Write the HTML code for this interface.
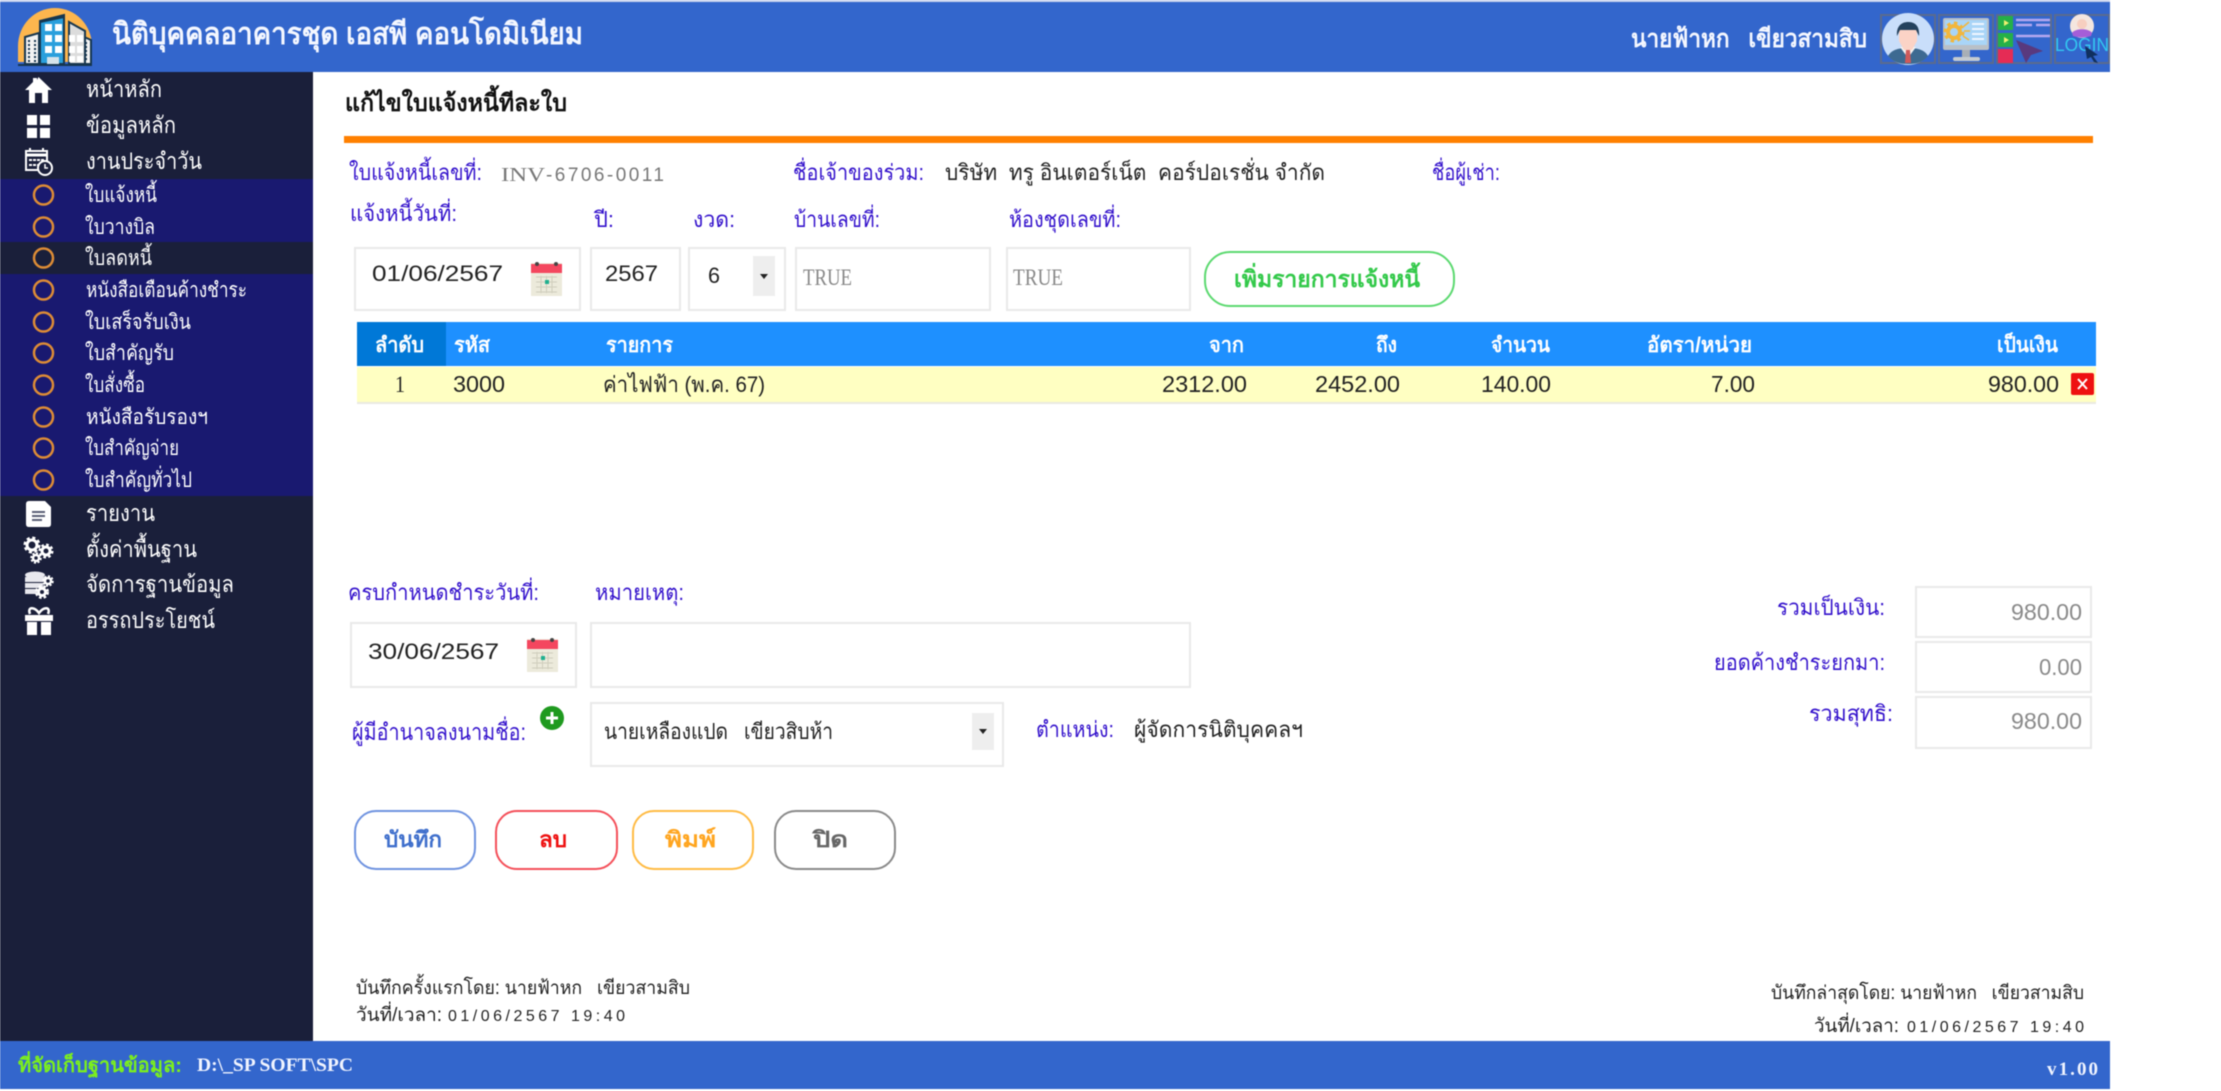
<!DOCTYPE html>
<html lang="th"><head><meta charset="utf-8"><title>แก้ไขใบแจ้งหนี้ทีละใบ</title>
<style>
html,body{margin:0;padding:0;background:#fff;width:2221px;height:1091px;overflow:hidden}
body{filter:blur(.45px)}
.b{position:absolute;box-sizing:border-box}
.i{border:2px solid #e9e9e9;background:#fff}
.btn{border:2px solid;background:#fff}
svg{position:absolute;left:0;top:0}
text{font-family:"Liberation Sans","Noto Sans CJK SC",sans-serif;font-size:22px}
.m{fill:#fff;font-size:23px}.s{fill:#fff;font-size:21px}
.l{fill:#3311cc;font-size:22px}.d{fill:#222;font-size:22px}
.h{fill:#fff;font-size:21px;font-weight:bold}.r{fill:#222;font-size:23px}
</style></head><body>
<div class="b" style="left:0;top:0;width:2110px;height:2px;background:#c9d4ee"></div>
<div class="b" style="left:0;top:2px;width:2110px;height:70px;background:#3366cc"></div>
<div class="b" style="left:0;top:72px;width:313px;height:969px;background:#1a1f3a"></div>
<div class="b" style="left:0;top:179px;width:313px;height:317px;background:#191970"></div>
<div class="b" style="left:0;top:242px;width:313px;height:32px;background:#1a1f3a"></div>
<div class="b" style="left:0;top:1041px;width:2110px;height:48px;background:#3366cc"></div>
<div class="b" style="left:344px;top:136px;width:1749px;height:7px;background:#ff8000"></div>

<div class="b i" style="left:354px;top:247px;width:227px;height:64px"></div>
<div class="b i" style="left:590px;top:247px;width:91px;height:64px"></div>
<div class="b i" style="left:688px;top:247px;width:98px;height:64px"></div>
<div class="b" style="left:753px;top:256px;width:22px;height:40px;background:#eee"></div>
<div class="b i" style="left:795px;top:247px;width:196px;height:64px"></div>
<div class="b i" style="left:1006px;top:247px;width:185px;height:64px"></div>
<div class="b btn" style="left:1204px;top:251px;width:251px;height:56px;border-color:#5cd970;border-radius:26px"></div>

<div class="b" style="left:357px;top:322px;width:1739px;height:44px;background:#1e90ff"></div>
<div class="b" style="left:357px;top:322px;width:89px;height:44px;background:#0078d7"></div>
<div class="b" style="left:357px;top:367px;width:1739px;height:35px;background:#ffffc2"></div>
<div class="b" style="left:357px;top:402px;width:1739px;height:2px;background:#e9e9e2"></div>
<div class="b" style="left:2071px;top:373px;width:23px;height:22px;background:#ee1111;border-radius:2px"></div>

<div class="b i" style="left:350px;top:622px;width:227px;height:66px"></div>
<div class="b i" style="left:590px;top:622px;width:601px;height:66px"></div>
<div class="b i" style="left:590px;top:702px;width:414px;height:65px"></div>
<div class="b" style="left:972px;top:713px;width:22px;height:37px;background:#eee"></div>
<div class="b i" style="left:1915px;top:586px;width:177px;height:52px"></div>
<div class="b i" style="left:1915px;top:641px;width:177px;height:52px"></div>
<div class="b i" style="left:1915px;top:696px;width:177px;height:53px"></div>

<div class="b btn" style="left:354px;top:810px;width:122px;height:60px;border-color:#6f93e0;border-radius:22px"></div>
<div class="b btn" style="left:495px;top:810px;width:123px;height:60px;border-color:#f4505a;border-radius:22px"></div>
<div class="b btn" style="left:632px;top:810px;width:122px;height:60px;border-color:#ffbb44;border-radius:22px"></div>
<div class="b btn" style="left:774px;top:810px;width:122px;height:60px;border-color:#8a8a8a;border-radius:22px"></div>

<svg width="2221" height="1091" viewBox="0 0 2221 1091" xmlns="http://www.w3.org/2000/svg">
<defs>
<g id="cal"><rect x="0" y="2" width="31" height="33" fill="#eceadb"/><rect x="0" y="3" width="31" height="9" fill="#f4475f"/><circle cx="6" cy="3" r="2" fill="#444"/><circle cx="25" cy="3" r="2" fill="#444"/><path d="M5 16H26M5 21H26M5 26H26M5 31H26M10 15V32M15.500 15V32M21 15V32" stroke="#cfcdbc" stroke-width="1"/><rect x="14" y="19" width="4" height="4" fill="#1fb08f"/></g>
</defs>
<!-- logo -->
<path d="M18 46A37 38 0 0 1 92 46V62H18Z" fill="#fdb64e"/>
<path d="M25 37L39 33V64H25Z" fill="#f2f2f2" stroke="#17364f" stroke-width="2"/>
<path d="M82 36L91 40V64H82Z" fill="#f2f2f2" stroke="#17364f" stroke-width="2"/>
<path d="M69 22L85 31V64H69Z" fill="#dcdcdc" stroke="#17364f" stroke-width="2"/>
<path d="M32 21L56 15V64H32Z" transform="translate(8 0)" fill="#2a9fdc" stroke="#17364f" stroke-width="2"/>
<path d="M64 16V64" stroke="#17364f" stroke-width="0"/>
<path d="M64 17V64H40V22Z" fill="#2a9fdc" stroke="#17364f" stroke-width="2"/>
<g fill="#fff"><rect x="45" y="24" width="7" height="7"/><rect x="55" y="24" width="7" height="7"/><rect x="45" y="35" width="7" height="7"/><rect x="55" y="35" width="7" height="7"/><rect x="45" y="46" width="7" height="7"/><rect x="55" y="46" width="7" height="7"/><rect x="69" y="35" width="6" height="7"/><rect x="77" y="35" width="6" height="7"/><rect x="69" y="46" width="6" height="7"/><rect x="77" y="46" width="6" height="7"/><rect x="69" y="56" width="6" height="6"/><rect x="77" y="56" width="6" height="6"/></g>
<rect x="47" y="57" width="12" height="7" fill="#d5e3ea"/>
<path d="M29 40V62M35 40V62M86 42V62" stroke="#17364f" stroke-width="2" stroke-dasharray="2 2"/>
<rect x="18" y="64" width="74" height="2" fill="#17364f"/>
<text x="112" y="44" textLength="471" lengthAdjust="spacingAndGlyphs" style="font-size:30px;font-weight:bold" fill="#f4f7ff">นิติบุคคลอาคารชุด เอสพี คอนโดมิเนียม</text>
<text x="1631" y="47" textLength="236" lengthAdjust="spacingAndGlyphs" style="font-size:25px;font-weight:bold" fill="#f4f7ff">นายฟ้าหก&#160;&#160; เขียวสามสิบ</text>

<!-- header icons -->
<g fill="none" stroke="#5a6a8e" stroke-width="2"><rect x="1881" y="15" width="54" height="48"/><rect x="1939" y="15" width="54" height="48"/><rect x="1997" y="15" width="54" height="48"/><rect x="2055" y="15" width="54" height="48"/></g>
<circle cx="1908" cy="39" r="26" fill="#c9defa"/>
<path d="M1888 56C1892 49 1900 48 1908 48C1916 48 1924 49 1928 56C1922 63 1915 64 1908 64C1901 64 1894 63 1888 56Z" fill="#3d6a91"/>
<path d="M1900 47L1908 58L1916 47Z" fill="#f3f3f3"/><path d="M1906 50H1910L1911 63H1905Z" fill="#cf5a5a"/>
<path d="M1899 30H1917V41L1912 50H1904L1899 41Z" fill="#fbd3c6"/>
<path d="M1897 36C1896 25 1903 22 1908 22C1914 22 1920 25 1919 36L1916 30H1900Z" fill="#24425e"/>
<rect x="1943" y="18" width="46" height="32" rx="2" fill="#b9c0c7"/><rect x="1945" y="20" width="42" height="25" fill="#a9d5f7"/>
<rect x="1962" y="50" width="8" height="7" fill="#a8afb6"/><rect x="1953" y="57" width="27" height="4" rx="2" fill="#c5cbd0"/>
<circle cx="1954" cy="32" r="6" fill="none" stroke="#f2b63c" stroke-width="4"/><circle cx="1954" cy="32" r="9" fill="none" stroke="#f2b63c" stroke-width="3" stroke-dasharray="3.500 3.500"/><path d="M1963 27L1969 22M1964 31H1970M1963 36L1969 40" stroke="#f2b63c" stroke-width="1.500"/>
<path d="M1972 24H1984M1972 29H1984M1972 34H1984M1972 39H1984" stroke="#f0f6ff" stroke-width="2"/>
<rect x="1998" y="16" width="15" height="14" fill="#25b048"/><rect x="1998" y="33" width="15" height="14" fill="#25b048"/><rect x="1998" y="49" width="15" height="14" fill="#e52c55"/>
<path d="M2004 20L2009 23L2004 26ZM2004 37L2009 40L2004 43Z" fill="#f0f070"/>
<path d="M2016 20H2050M2016 25H2032M2036 25H2050M2016 36H2050" stroke="#b4a7f0" stroke-width="2.500"/>
<path d="M2016 40L2043 51L2031 55L2026 63Z" fill="#59397e"/>
<circle cx="2082" cy="26" r="12" fill="#f4e6df"/><path d="M2072 33C2075 28 2089 28 2092 33L2091 36Q2082 39 2073 36Z" fill="#a45ed8"/><circle cx="2082" cy="24" r="5" fill="#f7cfc0"/>
<text x="2055" y="51" textLength="54" lengthAdjust="spacingAndGlyphs" style="font-size:18px" fill="#33c8f0">LOGIN</text>
<path d="M2085 46L2098 55L2093 56L2098 63L2094 62L2091 57L2087 59Z" fill="#10305f"/>

<!-- sidebar icons -->
<path d="M38.500 77L52 90H48V103H42V93H35V103H29V90H25L33 82V78H37V80Z" fill="#fff"/>
<g fill="#fff"><rect x="27" y="115" width="10" height="10"/><rect x="40" y="115" width="10" height="10"/><rect x="27" y="128" width="10" height="10"/><rect x="40" y="128" width="10" height="10"/></g>
<g fill="none" stroke="#fff"><rect x="26" y="151" width="21" height="19" stroke-width="2"/><path d="M26 155H47" stroke-width="3"/><path d="M30 148V152M43 148V152M29 160H44M29 165H41" stroke-width="2" stroke-dasharray="3 1"/></g><circle cx="45" cy="168" r="7" fill="#1a1f3a" stroke="#fff" stroke-width="2"/><path d="M45 164V168H48" stroke="#fff" fill="none" stroke-width="1.500"/>
<path d="M29 501H45L51 507V524Q51 527 48 527H29Q26 527 26 524V504Q26 501 29 501Z" fill="#fff"/><path d="M32 512H45M32 516H45M32 520H42" stroke="#5a5f75" stroke-width="2"/>
<g fill="none" stroke="#fff"><circle cx="32" cy="545" r="5" stroke-width="3"/><circle cx="32" cy="545" r="7" stroke-width="3" stroke-dasharray="3 2.500"/><circle cx="46" cy="551" r="4" stroke-width="3"/><circle cx="46" cy="551" r="6" stroke-width="3" stroke-dasharray="2.500 2.200"/><circle cx="36" cy="558" r="3" stroke-width="2.500"/><circle cx="36" cy="558" r="4.500" stroke-width="2.500" stroke-dasharray="2 1.500"/></g>
<g fill="#e8e8ee"><ellipse cx="35" cy="575" rx="10" ry="3.500"/><rect x="25" y="577" width="20" height="5"/><rect x="25" y="583" width="18" height="5"/><rect x="25" y="589" width="12" height="5"/></g>
<g fill="none" stroke="#fff"><circle cx="48" cy="581" r="3" stroke-width="2.500"/><circle cx="48" cy="581" r="4.500" stroke-width="2.500" stroke-dasharray="2 1.500"/><circle cx="42" cy="592" r="3.500" stroke-width="3"/><circle cx="42" cy="592" r="5.500" stroke-width="3" stroke-dasharray="2.500 2"/></g>
<g fill="#fff"><rect x="25" y="615" width="28" height="6"/><rect x="27" y="622" width="10" height="13"/><rect x="41" y="622" width="10" height="13"/></g><path d="M30 614C27 607 34 606 39 613C44 606 51 607 48 614" stroke="#fff" stroke-width="2.500" fill="none"/>
<g fill="none" stroke="#dd8c36" stroke-width="2.500"><ellipse cx="43.500" cy="195" rx="9.500" ry="9.500"/><ellipse cx="43.500" cy="227" rx="9.500" ry="9.500"/><ellipse cx="43.500" cy="258" rx="9.500" ry="9.500"/><ellipse cx="43.500" cy="290" rx="9.500" ry="9.500"/><ellipse cx="43.500" cy="322" rx="9.500" ry="9.500"/><ellipse cx="43.500" cy="353" rx="9.500" ry="9.500"/><ellipse cx="43.500" cy="385" rx="9.500" ry="9.500"/><ellipse cx="43.500" cy="417" rx="9.500" ry="9.500"/><ellipse cx="43.500" cy="448" rx="9.500" ry="9.500"/><ellipse cx="43.500" cy="480" rx="9.500" ry="9.500"/></g>

<!-- sidebar text -->
<text class="m" x="86" y="97" textLength="76" lengthAdjust="spacingAndGlyphs">หน้าหลัก</text>
<text class="m" x="86" y="133" textLength="90" lengthAdjust="spacingAndGlyphs">ข้อมูลหลัก</text>
<text class="m" x="86" y="169" textLength="116" lengthAdjust="spacingAndGlyphs">งานประจำวัน</text>
<text class="s" x="85" y="202" textLength="72" lengthAdjust="spacingAndGlyphs">ใบแจ้งหนี้</text>
<text class="s" x="85" y="234" textLength="70" lengthAdjust="spacingAndGlyphs">ใบวางบิล</text>
<text class="s" x="85" y="265" textLength="67" lengthAdjust="spacingAndGlyphs">ใบลดหนี้</text>
<text class="s" x="86" y="297" textLength="161" lengthAdjust="spacingAndGlyphs">หนังสือเตือนค้างชำระ</text>
<text class="s" x="85" y="329" textLength="106" lengthAdjust="spacingAndGlyphs">ใบเสร็จรับเงิน</text>
<text class="s" x="85" y="360" textLength="89" lengthAdjust="spacingAndGlyphs">ใบสำคัญรับ</text>
<text class="s" x="85" y="392" textLength="60" lengthAdjust="spacingAndGlyphs">ใบสั่งซื้อ</text>
<text class="s" x="86" y="424" textLength="122" lengthAdjust="spacingAndGlyphs">หนังสือรับรองฯ</text>
<text class="s" x="85" y="455" textLength="94" lengthAdjust="spacingAndGlyphs">ใบสำคัญจ่าย</text>
<text class="s" x="85" y="487" textLength="107" lengthAdjust="spacingAndGlyphs">ใบสำคัญทั่วไป</text>
<text class="m" x="86" y="521" textLength="69" lengthAdjust="spacingAndGlyphs">รายงาน</text>
<text class="m" x="86" y="557" textLength="111" lengthAdjust="spacingAndGlyphs">ตั้งค่าพื้นฐาน</text>
<text class="m" x="86" y="592" textLength="148" lengthAdjust="spacingAndGlyphs">จัดการฐานข้อมูล</text>
<text class="m" x="86" y="628" textLength="129" lengthAdjust="spacingAndGlyphs">อรรถประโยชน์</text>

<!-- content text -->
<text x="345" y="111" textLength="222" lengthAdjust="spacingAndGlyphs" style="font-size:24px;font-weight:bold" fill="#111">แก้ไขใบแจ้งหนี้ทีละใบ</text>
<text class="l" x="349" y="180" textLength="133" lengthAdjust="spacingAndGlyphs">ใบแจ้งหนี้เลขที่:</text>
<text x="501" y="181" textLength="44" lengthAdjust="spacingAndGlyphs" style="font-size:20px;font-family:'Liberation Serif',serif" fill="#777">INV</text>
<text x="546" y="181" textLength="118" lengthAdjust="spacing" style="font-size:19px" fill="#777">-6706-0011</text>
<text class="l" x="793" y="180" textLength="131" lengthAdjust="spacingAndGlyphs">ชื่อเจ้าของร่วม:</text>
<text class="d" x="945" y="180" textLength="380" lengthAdjust="spacingAndGlyphs">บริษัท&#160; ทรู อินเตอร์เน็ต&#160; คอร์ปอเรชั่น จำกัด</text>
<text class="l" x="1432" y="180" textLength="68" lengthAdjust="spacingAndGlyphs">ชื่อผู้เช่า:</text>
<text class="l" x="350" y="221" textLength="107" lengthAdjust="spacingAndGlyphs">แจ้งหนี้วันที่:</text>
<text class="l" x="594" y="227" textLength="20" lengthAdjust="spacingAndGlyphs">ปี:</text>
<text class="l" x="693" y="227" textLength="42" lengthAdjust="spacingAndGlyphs">งวด:</text>
<text class="l" x="794" y="227" textLength="86" lengthAdjust="spacingAndGlyphs">บ้านเลขที่:</text>
<text class="l" x="1009" y="227" textLength="112" lengthAdjust="spacingAndGlyphs">ห้องชุดเลขที่:</text>

<text class="d" x="372" y="281" textLength="131" lengthAdjust="spacingAndGlyphs">01/06/2567</text>
<use href="#cal" x="531" y="261"/>
<text class="d" x="605" y="281" textLength="53" lengthAdjust="spacingAndGlyphs">2567</text>
<text class="d" x="708" y="283" textLength="12" lengthAdjust="spacingAndGlyphs">6</text>
<path d="M760 274H768L764 279Z" fill="#222"/>
<text x="803" y="285" textLength="49" lengthAdjust="spacingAndGlyphs" style="font-family:'Liberation Serif',serif;font-size:23px" fill="#888">TRUE</text>
<text x="1013" y="285" textLength="50" lengthAdjust="spacingAndGlyphs" style="font-family:'Liberation Serif',serif;font-size:23px" fill="#888">TRUE</text>
<text x="1234" y="287" textLength="186" lengthAdjust="spacingAndGlyphs" style="font-size:23px;font-weight:bold" fill="#33c94a">เพิ่มรายการแจ้งหนี้</text>

<!-- table -->
<text class="h" x="375" y="352" textLength="49" lengthAdjust="spacingAndGlyphs">ลำดับ</text>
<text class="h" x="454" y="352" textLength="36" lengthAdjust="spacingAndGlyphs">รหัส</text>
<text class="h" x="606" y="352" textLength="67" lengthAdjust="spacingAndGlyphs">รายการ</text>
<text class="h" x="1209" y="352" textLength="35" lengthAdjust="spacingAndGlyphs">จาก</text>
<text class="h" x="1376" y="352" textLength="21" lengthAdjust="spacingAndGlyphs">ถึง</text>
<text class="h" x="1491" y="352" textLength="59" lengthAdjust="spacingAndGlyphs">จำนวน</text>
<text class="h" x="1647" y="352" textLength="105" lengthAdjust="spacingAndGlyphs">อัตรา/หน่วย</text>
<text class="h" x="1997" y="352" textLength="61" lengthAdjust="spacingAndGlyphs">เป็นเงิน</text>
<text class="r" x="395" y="392" textLength="10" lengthAdjust="spacingAndGlyphs" style="font-family:'Liberation Serif',serif">1</text>
<text class="r" x="453" y="392" textLength="52" lengthAdjust="spacingAndGlyphs">3000</text>
<text class="r" x="603" y="392" textLength="162" lengthAdjust="spacingAndGlyphs" style="font-size:22px">ค่าไฟฟ้า (พ.ค. 67)</text>
<text class="r" x="1162" y="392" textLength="85" lengthAdjust="spacingAndGlyphs">2312.00</text>
<text class="r" x="1315" y="392" textLength="85" lengthAdjust="spacingAndGlyphs">2452.00</text>
<text class="r" x="1481" y="392" textLength="70" lengthAdjust="spacingAndGlyphs">140.00</text>
<text class="r" x="1711" y="392" textLength="44" lengthAdjust="spacingAndGlyphs">7.00</text>
<text class="r" x="1988" y="392" textLength="71" lengthAdjust="spacingAndGlyphs">980.00</text>
<path d="M2078 379L2087 389M2087 379L2078 389" stroke="#fff" stroke-width="2"/>

<!-- lower form -->
<text class="l" x="348" y="600" textLength="191" lengthAdjust="spacingAndGlyphs">ครบกำหนดชำระวันที่:</text>
<text class="l" x="595" y="600" textLength="89" lengthAdjust="spacingAndGlyphs">หมายเหตุ:</text>
<text class="d" x="368" y="659" textLength="131" lengthAdjust="spacingAndGlyphs">30/06/2567</text>
<use href="#cal" x="527" y="637"/>
<text class="l" x="352" y="740" textLength="174" lengthAdjust="spacingAndGlyphs" style="font-size:23px">ผู้มีอำนาจลงนามชื่อ:</text>
<circle cx="552" cy="718" r="12" fill="#1f9a1f"/><path d="M546 718H558M552 712V724" stroke="#fff" stroke-width="3"/>
<text class="d" x="604" y="739" textLength="229" lengthAdjust="spacingAndGlyphs">นายเหลืองแปด&#160;&#160; เขียวสิบห้า</text>
<path d="M979 729H987L983 734Z" fill="#222"/>
<text x="1036" y="737" textLength="78" lengthAdjust="spacingAndGlyphs" style="font-size:22px" fill="#3311cc">ตำแหน่ง:</text>
<text class="d" x="1134" y="737" textLength="169" lengthAdjust="spacingAndGlyphs">ผู้จัดการนิติบุคคลฯ</text>
<text class="l" x="1777" y="615" textLength="108" lengthAdjust="spacingAndGlyphs">รวมเป็นเงิน:</text>
<text class="l" x="1714" y="670" textLength="171" lengthAdjust="spacingAndGlyphs">ยอดค้างชำระยกมา:</text>
<text class="l" x="1809" y="721" textLength="84" lengthAdjust="spacingAndGlyphs">รวมสุทธิ:</text>
<text x="2011" y="620" textLength="71" lengthAdjust="spacingAndGlyphs" style="font-size:23px" fill="#8a8a8a">980.00</text>
<text x="2039" y="675" textLength="43" lengthAdjust="spacingAndGlyphs" style="font-size:23px" fill="#8a8a8a">0.00</text>
<text x="2011" y="729" textLength="71" lengthAdjust="spacingAndGlyphs" style="font-size:23px" fill="#8a8a8a">980.00</text>

<text x="384" y="847" textLength="58" lengthAdjust="spacingAndGlyphs" style="font-size:22px;font-weight:bold" fill="#3f6fcc">บันทึก</text>
<text x="539" y="847" textLength="28" lengthAdjust="spacingAndGlyphs" style="font-size:22px;font-weight:bold" fill="#ee1111">ลบ</text>
<text x="665" y="847" textLength="51" lengthAdjust="spacingAndGlyphs" style="font-size:22px;font-weight:bold" fill="#ffa51f">พิมพ์</text>
<text x="813" y="847" textLength="35" lengthAdjust="spacingAndGlyphs" style="font-size:22px;font-weight:bold" fill="#666">ปิด</text>

<!-- audit -->
<text x="356" y="994" textLength="334" lengthAdjust="spacingAndGlyphs" style="font-size:19px" fill="#222">บันทึกครั้งแรกโดย: นายฟ้าหก&#160;&#160; เขียวสามสิบ</text>
<text x="356" y="1021" textLength="86" lengthAdjust="spacingAndGlyphs" style="font-size:19px" fill="#222">วันที่/เวลา:</text>
<text x="448" y="1021" textLength="177" lengthAdjust="spacing" style="font-size:16px" fill="#222">01/06/2567 19:40</text>
<text x="1771" y="999" textLength="313" lengthAdjust="spacingAndGlyphs" style="font-size:19px" fill="#222">บันทึกล่าสุดโดย: นายฟ้าหก&#160;&#160; เขียวสามสิบ</text>
<text x="1814" y="1032" textLength="85" lengthAdjust="spacingAndGlyphs" style="font-size:19px" fill="#222">วันที่/เวลา:</text>
<text x="1907" y="1032" textLength="177" lengthAdjust="spacing" style="font-size:16px" fill="#222">01/06/2567 19:40</text>

<!-- footer -->
<text x="18" y="1072" textLength="164" lengthAdjust="spacingAndGlyphs" style="font-size:20px;font-weight:bold" fill="#7cf01c">ที่จัดเก็บฐานข้อมูล:</text>
<text x="197" y="1071" textLength="156" lengthAdjust="spacingAndGlyphs" style="font-family:'Liberation Serif',serif;font-size:19px;font-weight:bold" fill="#f0f4ff">D:\_SP SOFT\SPC</text>
<text x="2047" y="1075" textLength="51" lengthAdjust="spacing" style="font-family:'Liberation Serif',serif;font-size:19px;font-weight:bold" fill="#f0f4ff">v1.00</text>
</svg>
</body></html>
